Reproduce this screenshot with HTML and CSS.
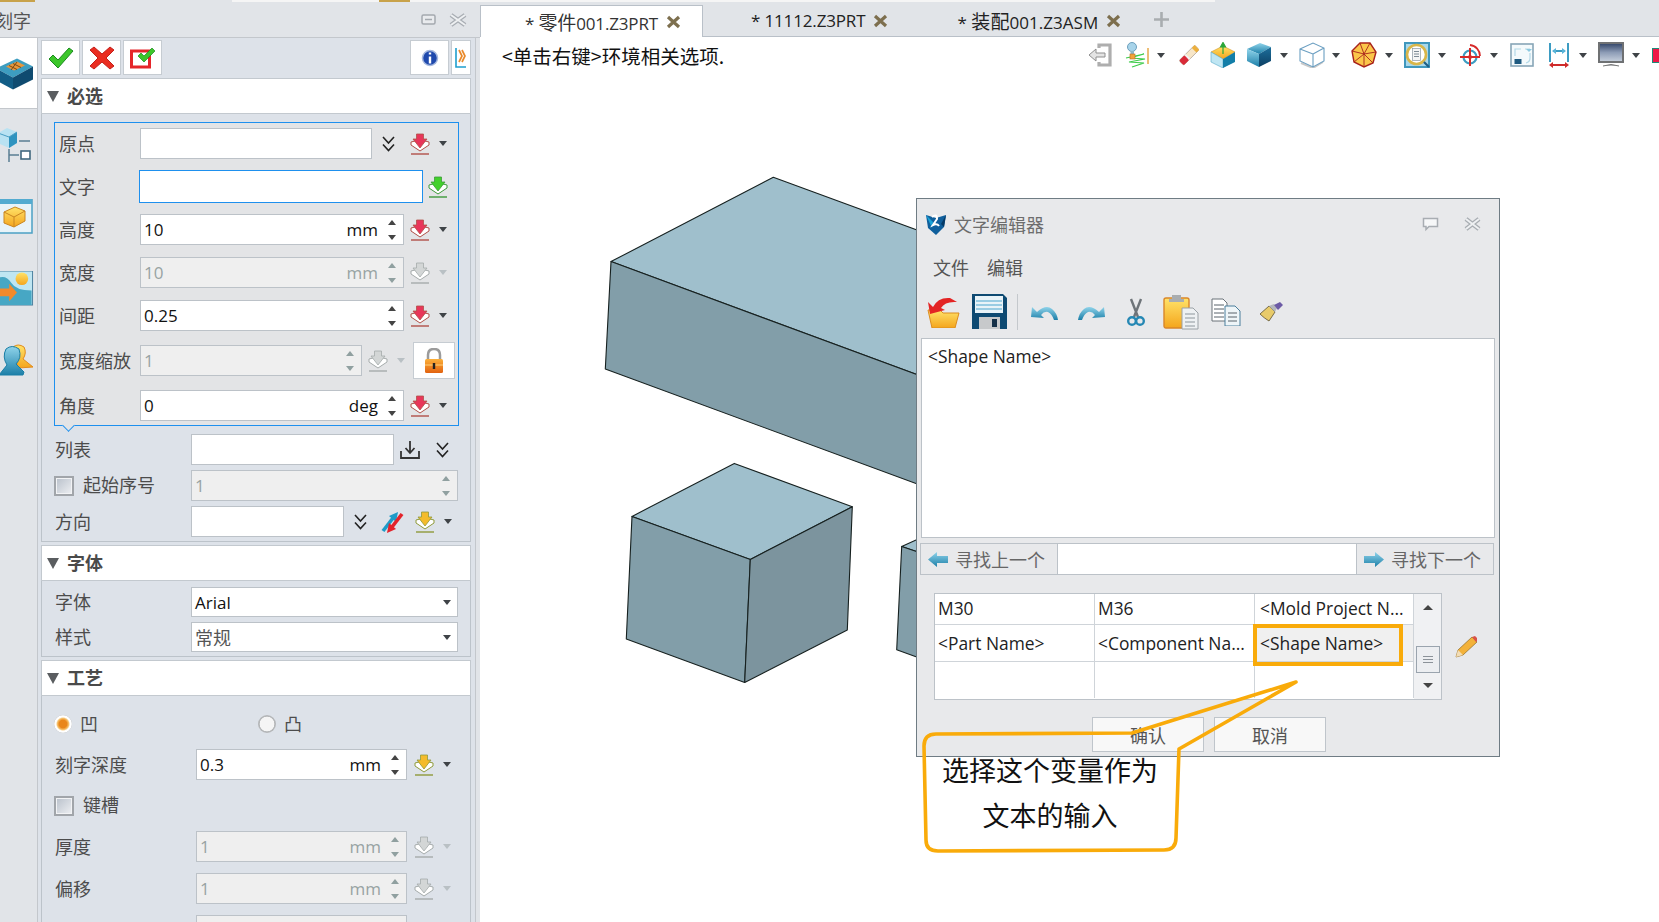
FILE: index.html
```html
<!DOCTYPE html>
<html lang="zh">
<head>
<meta charset="utf-8">
<title>刻字</title>
<link rel="stylesheet" href="styles.css">
</head>
<body>
<svg class="sprite" aria-hidden="true">
  <defs>
    <linearGradient id="gBlue" x1="0" y1="0" x2="0" y2="1"><stop offset="0" stop-color="#8fd3ea"/><stop offset="1" stop-color="#1c7fa8"/></linearGradient>
    <linearGradient id="gDark" x1="0" y1="0" x2="0" y2="1"><stop offset="0" stop-color="#1c6f9c"/><stop offset="1" stop-color="#0d3f63"/></linearGradient>
    <linearGradient id="gGold" x1="0" y1="0" x2="0" y2="1"><stop offset="0" stop-color="#ffe36a"/><stop offset="1" stop-color="#f4a51c"/></linearGradient>
    <linearGradient id="gScreen" x1="0" y1="0" x2="0" y2="1"><stop offset="0" stop-color="#2f4266"/><stop offset=".5" stop-color="#8d9cb6"/><stop offset="1" stop-color="#c9d2de"/></linearGradient>
    <linearGradient id="gLock" x1="0" y1="0" x2="0" y2="1"><stop offset="0" stop-color="#fbb03a"/><stop offset="1" stop-color="#e2620f"/></linearGradient>
    <symbol id="pick" viewBox="0 0 20 22">
      <path d="M1 9l4-1 5 5 5-5 4 1v3l-9 6-9-6z" fill="#fff" stroke="var(--u)" stroke-width="1"/>
      <path d="M6.500 1h7v5h3.500l-7 9-7-9h3.500z" fill="var(--c)" stroke="var(--u)" stroke-width=".8"/>
      <path d="M1 21h18" stroke="var(--u)" stroke-width="1.400"/>
    </symbol>
    <symbol id="chev" viewBox="0 0 13 16">
      <path d="M1 1l5.500 6L12 1M1 8.500l5.500 6 5.500-6" fill="none" stroke="#222" stroke-width="1.600"/>
    </symbol>
    <symbol id="tabx" viewBox="0 0 15 14">
      <path d="M2 2l11 10M13 2L2 12" stroke="#7d6f4e" stroke-width="3.200"/>
    </symbol>
  </defs>
</svg>

<div class="topstrip"></div>
<div class="app">
  <aside class="side">
    <header class="side-title">
      <span class="side-name">刻字</span>
      <svg class="ctl-restore" viewBox="0 0 15 11"><rect x="1" y="1" width="13" height="9" rx="1.500" fill="#e9ebee" stroke="#a4a9af" stroke-width="1.500"/><path d="M4 5.500h7" stroke="#a4a9af" stroke-width="1.500"/></svg>
      <svg class="ctl-close" viewBox="0 0 18 14"><path d="M2 2l14 10M16 2L2 12" stroke="#a8adb3" stroke-width="4.600"/><path d="M2 2l14 10M16 2L2 12" stroke="#eef0f2" stroke-width="2"/></svg>
    </header>
    <div class="side-main">
      <nav class="rail">
        <div class="rail-active">
          <svg class="rail-ic" viewBox="0 0 34 32"><path d="M-4 11L17 1l16 8-20 11z" fill="#3d9dc0"/><path d="M-4 11v12l17 9V20z" fill="#125d86"/><path d="M13 20v12l20-10V9z" fill="#0f4b70"/><path d="M6 9l11-5 8 4-11 5z" fill="#e9973b"/><path d="M9 8l8 4M13 6l8 4M17 4.500l-6 8" stroke="#7a4a14" stroke-width="1"/></svg>
        </div>
        <svg class="rail-ic" viewBox="0 0 34 35"><path d="M-2 6l9-5 10 4v11l-8 5-11-5z" fill="#b9e2f2"/><path d="M9 10v11l8-5V5z" fill="#2f93bf"/><path d="M-2 6l11 4 8-5" fill="none" stroke="#4a9ec4"/><path d="M19 14h11M9 22v13M9 28h10" stroke="#5a7d92" stroke-width="1.500"/><rect x="21" y="24" width="9" height="8" fill="#fff" stroke="#41687f" stroke-width="1.600"/></svg>
        <svg class="rail-ic" viewBox="0 0 34 35"><rect x="-2" y="0" width="34" height="34" fill="#e8f3f8" stroke="#4ba0c4" stroke-width="1.500"/><rect x="-2" y="0" width="34" height="5" fill="#53abd0"/><path d="M4 13l11-5 10 4v10l-11 6-10-4z" fill="url(#gGold)" stroke="#c98622"/><path d="M4 13l10 5 11-6M14 18v10" fill="none" stroke="#c98622"/></svg>
        <svg class="rail-ic" viewBox="0 0 34 36"><rect x="-2" y="0" width="35" height="35" fill="#bfe6f2" stroke="#4a7f9e"/><circle cx="22" cy="8" r="6.500" fill="url(#gGold)"/><path d="M-2 7q8-3 13 5t21 8v15H-2z" fill="#47a7c4"/><path d="M-2 18h11v-5l8 9-8 9v-5H-2z" fill="#f28a2b"/></svg>
        <svg class="rail-ic" viewBox="0 0 34 35"><path d="M13 4q5-4 11 0 3 6-1 12l10 8-15 1z" fill="url(#gGold)" stroke="#e28b1c"/><path d="M6 6q6-5 13 0 3 9-3 15l8 8-1 3H-1l8-10Q2 14 6 6z" fill="url(#gBlue)" stroke="#1a7ea6"/></svg>
      </nav>
      <div class="panel">
        <div class="actions">
          <button class="act"><svg viewBox="0 0 26 22"><path d="M1 12l4-4 5 5L21 1l4 3-15 17z" fill="#3cc62a" stroke="#1a8a1f"/></svg></button>
          <button class="act"><svg viewBox="0 0 26 24"><path d="M1 4l4-3 8 7 8-7 4 3-8 8 8 8-4 3-8-7-8 7-4-3 8-8z" fill="#ea2d21" stroke="#c4201a"/></svg></button>
          <button class="act"><svg viewBox="0 0 26 22"><path d="M1.500 4h18v16h-18z" fill="#fff" stroke="#e5262a" stroke-width="3"/><path d="M8 9l3-3 3 3 8-8 3 3-11 11z" fill="#3cc62a" stroke="#1a8a1f" stroke-width=".7"/></svg></button>
          <button class="act act-info"><svg viewBox="0 0 18 18"><circle cx="9" cy="9" r="7.500" fill="#1f49ad" stroke="#a5b8de" stroke-width="1.500"/><path d="M9 3.500v2M9 7.500v7" stroke="#fff" stroke-width="2.400"/></svg></button>
          <button class="act act-next"><svg viewBox="0 0 12 22"><path d="M1 1v19h10" fill="none" stroke="#1f9fce" stroke-width="1.600"/><path d="M4 3l3 6-3 6M7 3l3 6-3 6" fill="none" stroke="#e98a2b" stroke-width="1.700"/></svg></button>
        </div>

        <section>
          <h2 class="sec-head"><i class="sec-tri"></i>必选</h2>
          <div class="sec-body sec-first">
            <div class="group">
              <div class="row g"><label class="lb-g">原点</label><div class="f w232"></div><svg class="chev ml10"><use href="#chev"/></svg><svg class="pk c-red ml15"><use href="#pick"/></svg><i class="dd"></i></div>
              <div class="row g tall"><label class="lb-g">文字</label><div class="f w284 focus"></div><svg class="pk c-green ml5"><use href="#pick"/></svg></div>
              <div class="row g"><label class="lb-g">高度</label><div class="f w264"><span>10</span><span class="u">mm</span><i class="spin"></i></div><svg class="pk c-red ml6"><use href="#pick"/></svg><i class="dd"></i></div>
              <div class="row g mt1"><label class="lb-g">宽度</label><div class="f w264 dis"><span>10</span><span class="u">mm</span><i class="spin"></i></div><svg class="pk c-gray ml6"><use href="#pick"/></svg><i class="dd off"></i></div>
              <div class="row g mt1"><label class="lb-g">间距</label><div class="f w264"><span>0.25</span><span class="u"></span><i class="spin"></i></div><svg class="pk c-red ml6"><use href="#pick"/></svg><i class="dd"></i></div>
              <div class="row g mt3"><label class="lb-g">宽度缩放</label><div class="f w222 dis"><span>1</span><span class="u"></span><i class="spin"></i></div><svg class="pk c-gray ml6"><use href="#pick"/></svg><i class="dd off"></i>
                <button class="lock"><svg viewBox="0 0 20 25"><path d="M4 12V7q0-6 6-6t6 6v5" fill="none" stroke="#9b9b9b" stroke-width="2.500"/><rect x="1" y="11" width="18" height="14" rx="1.500" fill="url(#gLock)"/><path d="M1 17h18" stroke="#ffd27a"/><rect x="8.800" y="15" width="2.400" height="6" fill="#222"/></svg></button></div>
              <div class="row g mt3"><label class="lb-g">角度</label><div class="f w264"><span>0</span><span class="u">deg</span><i class="spin"></i></div><svg class="pk c-red ml6"><use href="#pick"/></svg><i class="dd"></i></div>
              <i class="notch"></i>
            </div>
            <div class="stack">
              <div class="row"><label class="lb">列表</label><div class="f w203"></div><svg class="export" viewBox="0 0 20 19"><path d="M1 11v7h18v-7" fill="none" stroke="#333" stroke-width="1.800"/><path d="M10 1v11M5.500 8l4.500 5 4.500-5" fill="none" stroke="#333" stroke-width="1.800"/></svg><svg class="chev ml16"><use href="#chev"/></svg></div>
              <div class="row"><span class="chk"></span><label class="lb-c">起始序号</label><div class="f w267 dis"><span>1</span><span class="u"></span><i class="spin"></i></div></div>
              <div class="row"><label class="lb">方向</label><div class="f w153"></div><svg class="chev ml10"><use href="#chev"/></svg>
                <svg class="flip" viewBox="0 0 23 22"><path d="M2 20L12 7" stroke="#1e9bc8" stroke-width="3.600"/><path d="M8 5l9-4-2 10z" fill="#1e9bc8"/><path d="M21 3L11 16" stroke="#e3232b" stroke-width="3.600"/><path d="M15 18l-9 4 2-10z" fill="#e3232b"/></svg>
                <svg class="pk c-yellow ml11"><use href="#pick"/></svg><i class="dd"></i></div>
            </div>
          </div>
        </section>

        <section>
          <h2 class="sec-head"><i class="sec-tri"></i>字体</h2>
          <div class="sec-body sec-tight">
            <div class="row h30"><label class="lb">字体</label><div class="f w267 sel"><span>Arial</span><i class="dd"></i></div></div>
            <div class="row h30"><label class="lb">样式</label><div class="f w267 sel"><span class="cjk">常规</span><i class="dd"></i></div></div>
          </div>
        </section>

        <section>
          <h2 class="sec-head"><i class="sec-tri"></i>工艺</h2>
          <div class="sec-body sec-craft">
            <div class="row"><span class="radio on"></span><label class="lb-r">凹</label><span class="radio second"></span><label class="lb-r">凸</label></div>
            <div class="row"><label class="lb lb-w">刻字深度</label><div class="f w211"><span>0.3</span><span class="u">mm</span><i class="spin"></i></div><svg class="pk c-yellow ml7"><use href="#pick"/></svg><i class="dd"></i></div>
            <div class="row"><span class="chk"></span><label class="lb-c">键槽</label></div>
            <div class="row"><label class="lb lb-w">厚度</label><div class="f w211 dis"><span>1</span><span class="u">mm</span><i class="spin"></i></div><svg class="pk c-gray ml7"><use href="#pick"/></svg><i class="dd off"></i></div>
            <div class="row mt1"><label class="lb lb-w">偏移</label><div class="f w211 dis"><span>1</span><span class="u">mm</span><i class="spin"></i></div><svg class="pk c-gray ml7"><use href="#pick"/></svg><i class="dd off"></i></div>
            <div class="row mt1"><label class="lb lb-w"></label><div class="f w211 dis"></div></div>
          </div>
        </section>
      </div>
    </div>
  </aside>

  <main class="work">
    <div class="tabs">
      <div class="tab active"><span>* <span class="tab-cjk">零件</span>001.Z3PRT</span><svg class="tx"><use href="#tabx"/></svg></div>
      <div class="tab"><span>* 11112.Z3PRT</span><svg class="tx"><use href="#tabx"/></svg></div>
      <div class="tab tab-wide"><span>* <span class="tab-cjk">装配</span>001.Z3ASM</span><svg class="tx"><use href="#tabx"/></svg></div>
      <svg class="tab-add" viewBox="0 0 15 15"><path d="M7.500 0v15M0 7.500h15" stroke="#a9adb0" stroke-width="2.600"/></svg>
    </div>
    <div class="viewbar">
      <span class="status">&lt;单击右键&gt;环境相关选项.</span>
      <div class="tools">
        <svg class="ti" viewBox="0 0 26 26"><path d="M12 6V3h11v20H12v-3" fill="none" stroke="#aeaeae" stroke-width="3.200"/><path d="M2 13l7-6v4h9v4H9v4z" fill="#e4e4e4" stroke="#8f8f8f"/></svg>
        <div class="tg"><svg class="ti" viewBox="0 0 26 26"><path d="M3 16l18-4-14 4 15 1-16 3 15 1-12 4" stroke="#3ecb4a" stroke-width="1.200" fill="none"/><path d="M25 6v16" stroke="#e5a33c" stroke-width="1.400"/><circle cx="9" cy="5" r="4.500" fill="#a8d4ea" stroke="#6d9fbd"/><rect x="7.500" y="9" width="3.500" height="3" fill="#8fb6c9"/><rect x="7" y="12" width="5" height="5" fill="#f2a33b" stroke="#b96f1e" stroke-width=".6"/></svg><i class="dd"></i></div>
        <svg class="ti eraser" viewBox="0 0 20 26"><g transform="rotate(45 10 13)"><rect x="7" y="2" width="6.500" height="22" rx="1.500" fill="#f7e6c8" stroke="#9c8f80" stroke-width=".6"/><rect x="7" y="2" width="6.500" height="4" fill="#edb03d"/><rect x="7" y="16" width="6.500" height="8" rx="1.500" fill="#d92a38"/><rect x="7" y="14.500" width="6.500" height="2" fill="#f3f3f3"/></g></svg>
        <svg class="ti" viewBox="0 0 26 26"><path d="M1 10l12-6 12 6-12 7z" fill="url(#gGold)" stroke="#d49425" stroke-width=".6"/><path d="M1 10v10l12 6V17z" fill="#bfe6f3" stroke="#55a9c9" stroke-width=".6"/><path d="M13 17v9l12-6V10z" fill="#127ea8"/><path d="M13 12V4M10.500 5L13 .5 15.500 5z" stroke="#2ba63a" fill="#2ba63a" stroke-width="1.200"/></svg>
        <div class="tg"><svg class="ti" viewBox="0 0 26 26"><path d="M1 7l13-6 11 4-12 7z" fill="url(#gBlue)"/><path d="M1 7v12l12 6V12z" fill="url(#gBlue)"/><path d="M13 12v13l12-6V5z" fill="url(#gDark)"/></svg><i class="dd"></i></div>
        <div class="tg"><svg class="ti" viewBox="0 0 26 26"><path d="M2 21l12 5 10-6" fill="none" stroke="#c9c9c9" stroke-width="2"/><path d="M1 7l13-6 11 5v13l-11 6-13-6z M14 12L1 7M14 12l11-6M14 12v13" fill="#fff" stroke="#6b9fc2" stroke-width="1.100"/></svg><i class="dd"></i></div>
        <div class="tg"><svg class="ti" viewBox="0 0 26 26"><path d="M9 1h10l6 9-3 11-9 4-10-5L1 9z" fill="#fbc64a" stroke="#a8231c" stroke-width="1.400"/><path d="M9 1l4 11 12-2M13 12l9 9M13 12l-10 8M13 12L1 9M13 12v13M13 12l6-11" stroke="#a8231c" stroke-width=".9" fill="none"/></svg><i class="dd"></i></div>
        <div class="tg"><svg class="ti" viewBox="0 0 26 26"><rect x="1" y="1" width="24" height="24" fill="#a9d8ea" stroke="#3f97bd" stroke-width="2"/><circle cx="12.500" cy="12.500" r="9.500" fill="#fff" stroke="#d8b64a" stroke-width="2.600"/><rect x="8.500" y="6.500" width="8" height="12" fill="#f5f5f5" stroke="#8b96a0" stroke-width=".7"/><path d="M10 9.500h5M10 12h5M10 14.500h5" stroke="#7d8a95"/><path d="M20 20l5 5" stroke="#1e5f86" stroke-width="2.200"/></svg><i class="dd"></i></div>
        <div class="tg"><svg class="ti" viewBox="0 0 26 26"><path d="M13 3a11 11 0 0 1 10 11" fill="none" stroke="#d62a2a" stroke-width="1.800"/><circle cx="13" cy="15" r="6.500" fill="none" stroke="#3d9cc2" stroke-width="2.200"/><path d="M13 6v18M3 15h20" stroke="#d62a2a" stroke-width="2"/><circle cx="13" cy="15" r="2" fill="#d62a2a"/></svg><i class="dd"></i></div>
        <svg class="ti" viewBox="0 0 26 26"><rect x="2" y="2" width="22" height="22" fill="#f4fafc" stroke="#87a6b7" stroke-width="1.600"/><path d="M6 14V7h6M16 7h5M21 11v5q0 4-4 5" fill="none" stroke="#b3d9e8" stroke-width="1.200"/><rect x="5.500" y="17" width="7" height="5" fill="#1f5a80"/><path d="M17 7l3 3 3-3" fill="#8bc9e0"/></svg>
        <div class="tg"><svg class="ti" viewBox="0 0 26 26"><path d="M4 1v19M22 1v19" stroke="#3d9cc2" stroke-width="2"/><path d="M7 9h12" stroke="#3d9cc2" stroke-width="2"/><path d="M6 9l4-3v6zM20 9l-4-3v6z" fill="#59b4d8"/><path d="M5 23h16" stroke="#cf2b2b" stroke-width="2"/><path d="M3 23l4-3v6zM23 23l-4-3v6z" fill="#cf2b2b"/></svg><i class="dd"></i></div>
        <div class="tg"><svg class="ti" viewBox="0 0 26 26"><rect x="1" y="1" width="24" height="19" fill="url(#gScreen)" stroke="#6f7173" stroke-width="2"/><path d="M5 24q8-3 16 0" fill="#b9bcbf" stroke="#777"/></svg><i class="dd"></i></div>
        <span class="redblock"></span>
      </div>
    </div>
    <svg class="model" viewBox="0 0 1179 885">
      <g stroke="#16201f" stroke-width="1.100" stroke-linejoin="round">
        <path d="M293.300 140.200L131 224.600L516 366.800V222z" fill="#9fbfcc"/>
        <path d="M131 224.600L125.300 332L516 476V366.800z" fill="#829ea9"/>
        <path d="M254.300 426.400L152 479.400L270.300 522.400L372.300 469.800z" fill="#9fbfcc"/>
        <path d="M152 479.400L146.300 602L264.700 645.400L270.300 522.400z" fill="#829ea9"/>
        <path d="M270.300 522.400L264.700 645.400L367.300 593L372.300 469.800z" fill="#7c949e"/>
        <path d="M421.700 509.400L500 474V536z" fill="#9fbfcc"/>
        <path d="M421.700 509.400L416.700 612.700L500 643V536z" fill="#829ea9"/>
      </g>
    </svg>

    <section class="dialog">
      <header class="dlg-title">
        <svg class="dlg-logo" viewBox="0 0 22 22"><path d="M1 2l10 3 10-3-2 12-8 8-8-7z" fill="#0f5f9c"/><path d="M1 2l7 7-1 6z" fill="#19a3d8"/><path d="M21 2l-5 9 3 3z" fill="#053a66"/><path d="M7 4q5-4 5 2l-4 6q4-2 6 1" fill="none" stroke="#fff" stroke-width="2"/></svg>
        <span class="dlg-name">文字编辑器</span>
        <svg class="dlg-c" viewBox="0 0 17 15"><path d="M1.500 1.500h14v8H7l-3 3v-3H1.500z" fill="#f6f7f8" stroke="#a8adb2" stroke-width="1.500"/></svg>
        <svg class="dlg-x" viewBox="0 0 17 14"><path d="M2 2l13 10M15 2L2 12" stroke="#a8adb2" stroke-width="4.600"/><path d="M2 2l13 10M15 2L2 12" stroke="#eef0f2" stroke-width="2"/></svg>
      </header>
      <div class="dlg-menu"><span>文件</span><span>编辑</span></div>
      <div class="dlg-tools">
        <svg class="t-open" viewBox="0 0 36 32"><path d="M1 14h12l3 3h16l-4 15H5z" fill="url(#gGold)" stroke="#db8c1e"/><path d="M6 11Q11 1 23 2l7 4q-12-1-16 6l4 2-15 4-2-12z" fill="#e32424"/></svg>
        <svg class="t-save" viewBox="0 0 35 35"><path d="M0 0h31l4 4v31H0z" fill="#0e4a72"/><rect x="3" y="2" width="28" height="17" fill="#e8f3f8"/><path d="M4 7h26M4 11h26M4 15h26" stroke="#7fc0dc" stroke-width="1.500"/><rect x="7" y="23" width="21" height="12" fill="#c7c9cb"/><rect x="20" y="25" width="5" height="8" fill="#143048"/></svg>
        <i class="t-sep"></i>
        <svg class="t-undo" viewBox="0 0 29 16"><path d="M7 8q9-8 15-3 5 4 6 11h-4q-2-6-6-8-4-1-7 3l3 3-13-1L2 3z" fill="url(#gBlue)"/></svg>
        <svg class="t-redo" viewBox="0 0 29 16"><path d="M22 8q-9-8-15-3-5 4-6 11h4q2-6 6-8 4-1 7 3l-3 3 13-1L27 3z" fill="url(#gBlue)"/></svg>
        <svg class="t-cut" viewBox="0 0 18 28"><path d="M4 1l7 18M14 1L7 19" stroke="#6e7479" stroke-width="2.400"/><circle cx="5" cy="23" r="3.800" fill="none" stroke="#2688b4" stroke-width="2.400"/><circle cx="13" cy="23" r="3.800" fill="none" stroke="#2688b4" stroke-width="2.400"/></svg>
        <svg class="t-paste" viewBox="0 0 36 36"><rect x="1" y="4" width="25" height="30" rx="2" fill="url(#gGold)" stroke="#d9862a" stroke-width="1.400"/><path d="M9 5V1h9v4h3v3H6V5z" fill="#a9adb0"/><path d="M19 14h11l5 5v16H19z" fill="#eef1f3" stroke="#9aa1a6"/><path d="M22 20h10M22 24h10M22 28h10M22 32h10" stroke="#8d969c"/></svg>
        <svg class="t-copy" viewBox="0 0 30 28"><path d="M1 1h11l4 4v18H1z" fill="#fff" stroke="#6a7279"/><path d="M3 7h10M3 11h10M3 15h10M3 19h10" stroke="#59636b"/><path d="M14 8h10l5 5v15H14z" fill="#eef5f8" stroke="#4a7f9c"/><path d="M17 15h9M17 19h9M17 23h9" stroke="#59636b"/></svg>
        <svg class="t-brush" viewBox="0 0 24 20"><path d="M1 12l9-8 6 6-6 9q-5-3-9-7z" fill="#e8cb6a" stroke="#5d5230" stroke-width=".8"/><path d="M10 4l5-2 3 4-2 4z" fill="#b4b7bc"/><path d="M15 3l6-3 3 3-5 5z" fill="#6c5ba6"/></svg>
      </div>
      <div class="dlg-text">&lt;Shape Name&gt;</div>
      <div class="dlg-find">
        <button class="find-btn"><svg viewBox="0 0 20 15"><path d="M0 7.500L9 0v4h11v7H9v4z" fill="url(#gBlue)"/></svg><span>寻找上一个</span></button>
        <div class="find-input"></div>
        <button class="find-btn"><svg viewBox="0 0 20 15"><path d="M20 7.500L11 0v4H0v7h11v4z" fill="url(#gBlue)"/></svg><span>寻找下一个</span></button>
      </div>
      <div class="dlg-vars">
        <div class="vars">
          <div class="vars-grid">
            <div class="r1">M30</div><div class="r1">M36</div><div class="c3 r1">&lt;Mold Project N...</div>
            <div>&lt;Part Name&gt;</div><div>&lt;Component Na...</div><div class="c3 sel-cell">&lt;Shape Name&gt;</div>
            <div></div><div></div><div class="c3"></div>
          </div>
          <div class="vbar"><i class="up"></i><span class="thumb"></span><i class="down"></i></div>
        </div>
        <svg class="pencil" viewBox="0 0 23 23"><path d="M1 22l2-7L17 2l5 5L8 20z" fill="#f3b23a" stroke="#8f6a22" stroke-width=".7"/><path d="M17 2l3-1 2 2 0 3-1 1z" fill="#d9534a"/><path d="M1 22l2-7 5 5z" fill="#f2ddb6"/></svg>
      </div>
      <div class="dlg-buttons"><button>确认</button><button>取消</button></div>
    </section>
  </main>
</div>

<svg class="annot" viewBox="0 0 1659 922">
  <rect x="1255" y="626" width="146" height="38" fill="none" stroke="#f9ab0a" stroke-width="4"/>
  <path d="M936 734L1132 733L1296 682L1179 749L1176 838Q1176 850 1164 850L938 851Q926 851 926 840L924 746Q924 734 936 734Z" fill="none" stroke="#f9ab0a" stroke-width="3.600" stroke-linejoin="round"/>
</svg>
<div class="callout">选择这个变量作为<br>文本的输入</div>
</body>
</html>
```
FILE: styles.css
```css
* { box-sizing: border-box; }
html, body { margin: 0; height: 100%; }
body {
  width: 1659px; height: 922px; overflow: hidden; position: relative; background: #fff;
  font-family: "Open Sans", "Noto Sans CJK SC", sans-serif; font-size: 17px; color: #111;
}
button { font: inherit; padding: 0; margin: 0; }
i { display: block; font-style: normal; }
.sprite { position: absolute; width: 0; height: 0; }
.topstrip {
  height: 2px;
  background: linear-gradient(90deg, #c8a24a 0 35px, #e1e4e8 35px 232px, #f5f5f5 232px 379px, #c8a24a 379px 410px, #f5f5f5 410px 1215px, #e1e4e8 1215px);
}
.app { display: flex; height: 920px; }

/* left side */
.side { width: 480px; flex: none; display: flex; flex-direction: column; background: #e1e4e8; overflow: hidden; }
.side-title { height: 35px; flex: none; display: flex; align-items: center; color: #555; font-size: 18px; font-family: "Noto Sans CJK SC", sans-serif; }
.side-name { margin-left: -5px; }
.ctl-restore { width: 15px; height: 11px; margin-left: auto; }
.ctl-close { width: 18px; height: 14px; margin: 0 13px 0 13px; }
.side-main { flex: 1; display: flex; min-height: 0; border-top: 1px solid #c3c7cc; }
.rail { width: 38px; flex: none; display: flex; flex-direction: column; align-items: flex-start; gap: 37px; border-right: 1px solid #c3c7cc; background: #e1e4e8; overflow: hidden; }
.rail-active { width: 37px; height: 71px; margin-bottom: -19px; background: #fff; border-bottom: 1px solid #c3c7cc; display: flex; align-items: center; }
.rail-ic { width: 34px; height: 35px; flex: none; display: block; }
.panel { width: 438px; flex: none; background: #dde2e9; padding: 2px 4px 0 3px; border-right: 1px solid #c3c7cc; overflow: hidden; }
.actions { display: flex; gap: 2px; height: 35px; margin-bottom: 3px; }
.act { width: 39px; height: 35px; background: #fff; border: 1px solid #c6ccd2; display: flex; align-items: center; justify-content: center; }
.act svg { width: 26px; height: 24px; }
.act-info { margin-left: auto; }
.act-info svg { width: 18px; height: 18px; }
.act-next { width: 20px; }
.act-next svg { width: 12px; height: 22px; }
section { margin: 0; }
.sec-head { height: 36px; margin: 0; padding-bottom: 2px; display: flex; align-items: center; background: #fff; border: 1px solid #c3c9cf; font: 700 18px "Noto Sans CJK SC", sans-serif; color: #4a4a4a; }
.sec-tri { width: 0; height: 0; margin: 2px 8px 0 5px; border-left: 6.5px solid transparent; border-right: 6.5px solid transparent; border-top: 11px solid #5a5d60; }
.sec-body { border: 1px solid #bcc3ca; border-top: 0; padding: 0 13px; margin-bottom: 3px; display: flex; flex-direction: column; }
.sec-first { padding-top: 8px; padding-bottom: 4px; }
.sec-tight { padding-top: 6px; padding-bottom: 4px; gap: 5px; }
.sec-craft { padding-top: 12px; gap: 10px; margin-bottom: 0; }
.group { position: relative; margin-left: -1px; width: 405px; height: 304px; padding: 5px 0 0 4px; border: 1.5px solid #1e90ee; background: #e3e4e6; display: flex; flex-direction: column; gap: 11px; }
.notch { position: absolute; left: 9px; bottom: -5px; width: 9px; height: 9px; background: #e3e4e6; border: solid #1e90ee; border-width: 0 1.5px 1.5px 0; transform: rotate(45deg); }
.stack { display: flex; flex-direction: column; gap: 5px; margin-top: 8px; }
.row { height: 31px; flex: none; display: flex; align-items: center; }
.row.tall { height: 33px; }
.row.h30 { height: 30px; }
.mt1 { margin-top: 1px; }
.mt3 { margin-top: 3px; }
.row label { font: 18px "Noto Sans CJK SC", sans-serif; color: #4c4c4c; flex: none; height: 26px; line-height: 26px; margin-top: -2px; }
.lb-g { width: 81px; }
.row.tall .lb-g { margin-right: -1px; }
.lb { width: 136px; }
.lb-w { width: 141px; }
.lb-c { width: 108px; margin-left: 9px; }
.row .lb-c { margin-top: -4px; }
.chk { width: 20px; height: 20px; margin-left: -1px; flex: none; border: 2px solid #a1a5aa; background: linear-gradient(135deg, #b8c0ca, #eef0f3); box-shadow: inset 0 0 0 1px #f2f3f5; }
.f { height: 100%; flex: none; display: flex; align-items: center; padding-left: 3px; background: #fff; border: 1.4px solid #bcc2c8; color: #111; }
.f.dis { background: #efefef; color: #98a3a3; }
.f.focus { border: 1.5px solid #1e90ee; }
.f .u { margin-left: auto; }
.f.sel .dd { margin-left: auto; margin-right: 6px; }
.cjk { font: 18px "Noto Sans CJK SC", sans-serif; color: #555; }
.spin { width: 17px; margin: 0 3px 0 5px; flex: none; display: flex; flex-direction: column; align-items: center; gap: 10px; }
.spin::before, .spin::after { content: ""; width: 0; height: 0; border-left: 4.500px solid transparent; border-right: 4.500px solid transparent; }
.spin::before { border-bottom: 5px solid #444; }
.spin::after { border-top: 5px solid #444; }
.dis .spin::before { border-bottom-color: #90a0a0; }
.dis .spin::after { border-top-color: #90a0a0; }
.w153 { width: 153px; } .w203 { width: 203px; } .w211 { width: 211px; } .w222 { width: 222px; }
.w232 { width: 232px; } .w264 { width: 264px; } .w267 { width: 267px; } .w284 { width: 284px; }
.pk { width: 20px; height: 22px; flex: none; }
.c-red { --c: #e8365a; --u: #b05048; }
.c-green { --c: #43d12c; --u: #3d9a3a; }
.c-yellow { --c: #f4bb2c; --u: #8f9a3a; }
.c-gray { --c: #d3d6d6; --u: #a5abab; }
.chev { width: 13px; height: 16px; flex: none; }
.ml5 { margin-left: 5px; } .ml6 { margin-left: 6px; } .ml7 { margin-left: 7px; } .ml10 { margin-left: 10px; } .ml11 { margin-left: 11px; } .ml15 { margin-left: 15px; } .ml16 { margin-left: 16px; }
.dd { width: 0; height: 0; flex: none; margin-left: 9px; border-left: 4.500px solid transparent; border-right: 4.500px solid transparent; border-top: 5px solid #3f4347; }
.dd.off { border-top-color: #b9c0c4; }
.lock { width: 42px; height: 37px; margin-left: 8px; flex: none; background: #fff; border: 1px solid #c6ccd2; display: flex; align-items: center; justify-content: center; }
.lock svg { width: 20px; height: 25px; }
.export { width: 20px; height: 19px; margin-left: 6px; flex: none; }
.flip { width: 23px; height: 22px; margin-left: 14px; flex: none; }
.radio { width: 18px; height: 18px; margin-left: -1px; flex: none; border-radius: 50%; background: radial-gradient(circle, #f5f5f5 0 55%, #b5b7b9 60% 100%); }
.radio.on { background: radial-gradient(circle, #e9861a 0 30%, #f6c26d 45%, #fff 55% 65%, #a8a8a8 75% 100%); }
.radio.second { margin-left: 162px; }
.row .lb-r { margin-left: 8px; width: 16px; }

/* right side */
.work { flex: 1; position: relative; min-width: 0; display: flex; flex-direction: column; }
.tabs { height: 35px; flex: none; display: flex; align-items: flex-end; background: #e1e4e8; border-bottom: 1px solid #b9c0c8; font-size: 17px; color: #222; }
.tab { height: 31px; display: flex; align-items: center; padding: 0 21px 0 48px; font-family: "Open Sans", "Noto Sans CJK SC", sans-serif; letter-spacing: -.15px; }
.tab.active { background: #fff; height: 32px; margin-bottom: -1px; padding-left: 44px; border: 1px solid #b9c0c8; border-bottom: 0; color: #333; }
.tab-cjk { font-size: 19px; }
.tab-wide { letter-spacing: .05px; }
.tx { width: 15px; height: 14px; margin-left: 8px; flex: none; }
.tab-add { width: 15px; height: 15px; margin-left: 12px; align-self: center; }
.viewbar { height: 36px; flex: none; display: flex; align-items: center; position: relative; z-index: 1; }
.status { margin-left: 22px; font-family: "Noto Sans CJK SC", "Open Sans", sans-serif; font-size: 19.5px; color: #111; }
.tools { margin-left: auto; display: flex; align-items: center; gap: 10.6px; }
.tg { display: flex; align-items: center; gap: 7px; }
.tg .dd { margin: 0 .5px; }
.ti { width: 26px; height: 26px; flex: none; }
.eraser { width: 20px; margin-left: 3px; }
.redblock { width: 7px; height: 15px; margin-left: 1px; background: #ee1747; border: 1px solid #1e8a78; border-right: 0; }
.model { position: absolute; left: 0; top: 35px; width: 1179px; height: 885px; }

/* dialog */
.dialog { position: absolute; left: 436px; top: 196px; width: 584px; height: 559px; background: #e8e9eb; border: 1.5px solid #6f7c84; display: flex; flex-direction: column; font-size: 17.4px; }
.dlg-title { height: 50px; flex: none; display: flex; align-items: center; padding-left: 8px; font: 18px "Noto Sans CJK SC", sans-serif; color: #6d6d6d; }
.dlg-logo { width: 22px; height: 22px; margin-right: 7px; }
.dlg-c { width: 17px; height: 15px; margin-left: auto; }
.dlg-x { width: 17px; height: 14px; margin: 0 18px 0 25px; }
.dlg-menu { height: 36px; flex: none; display: flex; gap: 18px; align-items: center; padding-left: 16px; font: 18px "Noto Sans CJK SC", sans-serif; color: #555; }
.dlg-tools { height: 53px; flex: none; position: relative; display: flex; align-items: center; }
.t-open { width: 36px; height: 32px; margin-left: 10px; }
.t-save { width: 35px; height: 35px; margin-left: 9px; }
.t-sep { width: 1px; height: 36px; margin-left: 10px; background: #c4c8cc; }
.t-undo { width: 29px; height: 16px; margin-left: 12px; }
.t-redo { width: 29px; height: 16px; margin-left: 18px; }
.t-cut { width: 18px; height: 28px; margin-left: 21px; }
.t-paste { width: 36px; height: 36px; margin-left: 18px; }
.t-copy { width: 30px; height: 28px; margin-left: 12px; }
.t-brush { width: 24px; height: 20px; margin-left: 18px; }
.dlg-text { width: 574px; height: 200px; flex: none; margin-left: 4px; padding: 6px 6px; background: #fff; border: 1px solid #bcc2c8; color: #222; line-height: 22px; }
.dlg-find { width: 574px; height: 32px; flex: none; margin: 5px 0 0 3px; display: flex; border: 1px solid #bcc2c8; }
.find-btn { width: 136px; flex: none; display: flex; align-items: center; gap: 7px; padding-left: 7px; background: #e8e9eb; border: 0; font: 18px "Noto Sans CJK SC", sans-serif; color: #666; }
.find-btn svg { width: 20px; height: 15px; }
.find-input { flex: 1; background: #fff; border-right: 1px solid #bcc2c8; border-left: 1px solid #bcc2c8; }
.dlg-vars { margin: 18px 0 0 17px; height: 107px; flex: none; display: flex; align-items: center; gap: 13px; }
.vars { width: 508px; height: 107px; flex: none; display: flex; border: 1.5px solid #bcc2c8; }
.vars-grid { width: 479px; display: grid; grid-template-columns: 160px 160px 159px; grid-template-rows: 31px 37px 36px; background: #fff; color: #222; }
.vars-grid div { display: flex; align-items: center; padding-left: 3px; border-right: 1px solid #cfd4d9; border-bottom: 1px solid #cfd4d9; white-space: nowrap; overflow: hidden; }
.vars-grid div:nth-last-child(-n+3) { border-bottom: 0; }
.vars-grid .c3 { padding-left: 5px; }
.vars-grid .r1 { padding-bottom: 3px; }
.vars-grid .sel-cell { background: #f0f0f0; }
.vbar { flex: 1; display: flex; flex-direction: column; align-items: center; background: #f0f1f3; position: relative; padding-top: 11px; }
.vbar .up { width: 0; height: 0; flex: none; border-left: 5px solid transparent; border-right: 5px solid transparent; border-bottom: 5px solid #444; }
.vbar .thumb { width: 24px; height: 27px; flex: none; margin: 36px 0 10px; background: #eceef1 repeating-linear-gradient(#8b9299 0 1px, transparent 1px 3px) center / 10px 7px no-repeat; border: 1px solid #9aa4ae; }
.vbar .down { width: 0; height: 0; flex: none; border-left: 5px solid transparent; border-right: 5px solid transparent; border-top: 5px solid #444; }
.pencil { width: 23px; height: 23px; flex: none; }
.dlg-buttons { margin: 17px 0 0 175px; display: flex; gap: 10px; }
.dlg-buttons button { width: 112px; height: 35px; background: #f8f8f8; border: 1px solid #bfc5cb; color: #555; font: 18px "Noto Sans CJK SC", sans-serif; }

/* annotation overlay */
.annot { position: absolute; left: 0; top: 0; width: 1659px; height: 922px; pointer-events: none; }
.callout { position: absolute; left: 924px; top: 747px; width: 252px; text-align: center; font: 27px/45px "Noto Sans CJK SC", sans-serif; color: #111; }
```
